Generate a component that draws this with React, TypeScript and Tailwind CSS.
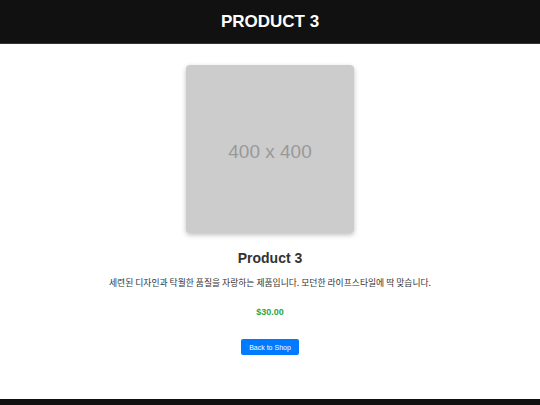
export default function App() {
  return (
    <div className="min-h-[405px] flex flex-col bg-white font-['Liberation_Sans','Noto_Sans_CJK_KR',sans-serif]">
      <header className="h-[44px] bg-[#111111] border-b border-[#333333] flex items-center justify-center">
        <h1 className="text-white text-[17px] font-bold leading-none">PRODUCT 3</h1>
      </header>

      <main className="flex-1 flex flex-col items-center pt-[21px]">
        <div className="w-[168px] h-[168px] rounded-[4px] bg-[#cccccc] shadow-[0_2px_5px_rgba(0,0,0,0.25)] flex items-center justify-center pt-[4px]">
          <span className="text-[#999999] text-[19px] leading-none">400 x 400</span>
        </div>

        <h2 className="mt-[15px] text-[14px] font-bold text-[#333333] leading-[20px]">Product 3</h2>

        <p className="mt-[9px] text-[8.8px] text-[#333333] leading-[12px] font-['Noto_Sans_CJK_KR',sans-serif]">
          세련된 디자인과 탁월한 품질을 자랑하는 제품입니다. 모던한 라이프스타일에 딱 맞습니다.
        </p>

        <p className="mt-[17px] text-[9px] font-bold text-[#28a745] leading-[12px]">$30.00</p>

        <button className="mt-[21px] w-[58px] h-[16px] rounded-[2px] bg-[#007bff] text-white text-[7px] leading-none flex items-center justify-center">
          Back to Shop
        </button>
      </main>

      <footer className="h-[6px] bg-[#111111]" />
    </div>
  );
}
